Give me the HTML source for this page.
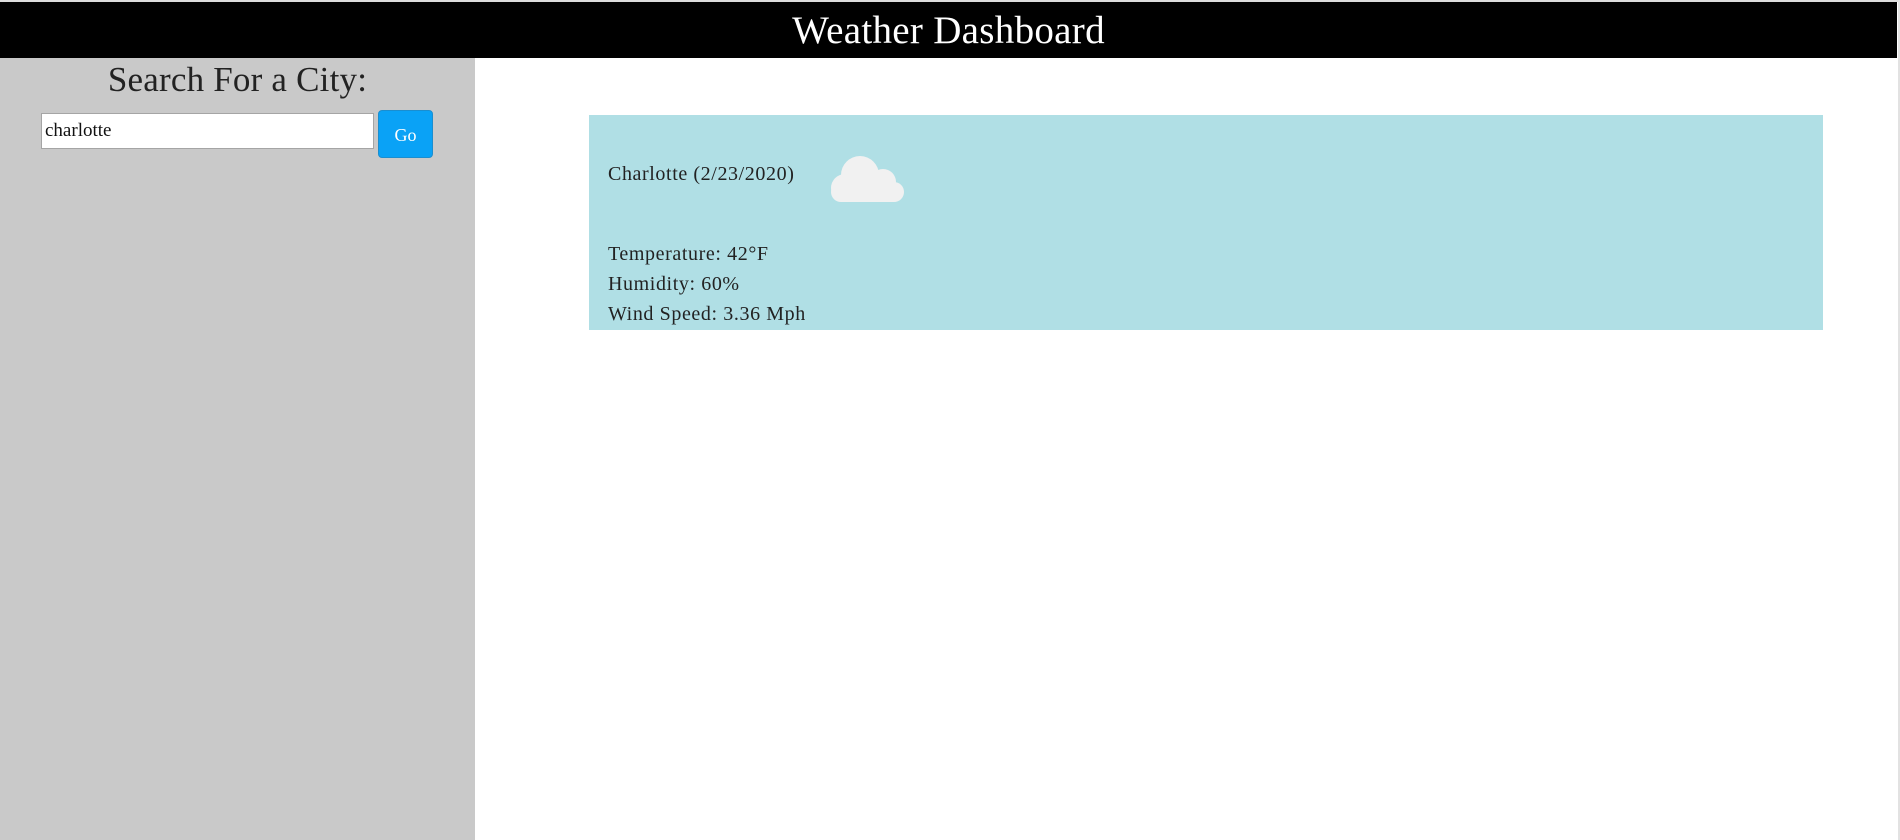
<!DOCTYPE html>
<html><head><meta charset="utf-8"><style>
*{margin:0;padding:0;box-sizing:border-box}
body{width:1900px;height:840px;background:#fff;position:relative;overflow:hidden;font-family:"Liberation Serif",serif;color:#222}
#top{position:absolute;left:0;top:0;width:1900px;height:2px;background:#ddd}
#hdr{position:absolute;left:0;top:2px;width:1897px;height:56px;background:#000;color:#fff;text-align:center;font-size:39px;line-height:58px;letter-spacing:0.3px}
#edge{position:absolute;right:0;top:0;width:2px;height:840px;background:#e2e2e2}
#side{position:absolute;left:0;top:58px;width:475px;height:782px;background:#c9c9c9}
#side h2{position:absolute;left:0;width:475px;top:2px;text-align:center;font-weight:normal;font-size:35px;color:#222;line-height:40px;letter-spacing:0.2px}
#inp{position:absolute;left:41px;top:113px;width:333px;height:36px;background:#fff;border:1px solid #a5a5a5;font-size:19px;line-height:34px;padding-left:3px;color:#111}
#go{position:absolute;left:378px;top:110px;width:55px;height:48px;background:#0aa2f6;border:1px solid #1a8ed0;border-radius:4px;color:#fff;font-size:18px;text-align:center;line-height:48px}
#card{position:absolute;left:589px;top:115px;width:1234px;height:215px;background:#b0dfe5}
.t{position:absolute;left:19px;font-size:20px;letter-spacing:0.6px;color:#222;white-space:nowrap}
</style></head><body>
<div id="top"></div>
<div id="hdr">Weather Dashboard</div>
<div id="edge"></div>
<div id="side"><h2>Search For a City:</h2></div>
<div id="inp">charlotte</div>
<div id="go">Go</div>
<div id="card">
<div class="t" style="top:48px">Charlotte (2/23/2020)</div>
<svg style="position:absolute;left:241px;top:40px" width="75" height="47" viewBox="0 0 75 47">
<g fill="#f1f1f1"><circle cx="30" cy="20" r="19"/><circle cx="53" cy="27" r="13"/><circle cx="15" cy="33" r="14"/><rect x="1" y="27" width="73" height="20" rx="10"/></g></svg>
<div class="t" style="top:128px">Temperature: 42°F</div>
<div class="t" style="top:158px">Humidity: 60%</div>
<div class="t" style="top:188px">Wind Speed: 3.36 Mph</div>
</div>
</body></html>
